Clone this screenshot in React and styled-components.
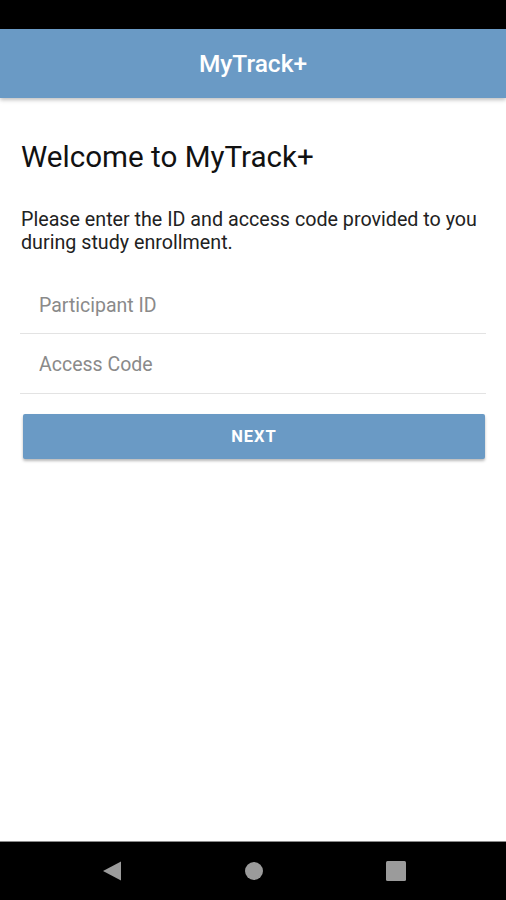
import styled, { createGlobalStyle } from "styled-components";

const GlobalStyle = createGlobalStyle`
  html, body {
    margin: 0;
    padding: 0;
    background: #fff;
  }
  body {
    font-family: Roboto, "Noto Sans", sans-serif;
  }
`;

const Screen = styled.div`
  width: 506px;
  height: 900px;
  display: flex;
  flex-direction: column;
  background: #fff;
  overflow: hidden;
`;

const StatusBar = styled.div`
  height: 29px;
  background: #000;
  flex-shrink: 0;
`;

const AppBar = styled.header`
  height: 69px;
  background: #6a9ac5;
  color: #fff;
  display: flex;
  align-items: center;
  justify-content: center;
  font-size: 24.5px;
  font-weight: 500;
  box-shadow: 0 2px 4px rgba(0, 0, 0, 0.25);
  flex-shrink: 0;
  position: relative;
  z-index: 1;
`;

const Content = styled.main`
  flex: 1;
  padding: 42px 19px 0 21px;
  display: flex;
  flex-direction: column;
`;

const Heading = styled.h1`
  margin: 0;
  font-size: 29.6px;
  font-weight: 400;
  color: #111;
  line-height: 34px;
`;

const Intro = styled.p`
  margin: 34px 0 0;
  font-size: 19.7px;
  line-height: 23px;
  color: #222;
`;

const Field = styled.input`
  display: block;
  width: 100%;
  box-sizing: border-box;
  height: ${(p) => (p.$first ? "80px" : "60px")};
  padding: ${(p) => (p.$first ? "23px 0 0 19px" : "1px 0 0 19px")};
  border: none;
  border-bottom: 1.5px solid #e3e3e3;
  font-family: Roboto, "Noto Sans", sans-serif;
  font-size: 19.5px;
  color: #333;
  outline: none;
  background: transparent;
  margin-left: -1px;

  &::placeholder {
    color: #8a8a8a;
  }
`;

const Button = styled.button`
  margin: 20px 0 0 2px;
  width: 462px;
  height: 45px;
  border: none;
  border-radius: 2px;
  background: #6a9ac5;
  color: #fff;
  font-family: Roboto, "Noto Sans", sans-serif;
  font-size: 16.5px;
  font-weight: 700;
  letter-spacing: 1px;
  box-shadow: 0 2px 3px rgba(0, 0, 0, 0.28);
  cursor: pointer;
`;

const NavBar = styled.nav`
  height: 58px;
  background: #000;
  border-top: 1px solid #8a8a8a;
  display: flex;
  align-items: center;
  justify-content: center;
  gap: 120px;
  padding-left: 2px;
  flex-shrink: 0;
`;

const NavIcon = styled.svg`
  width: 22px;
  height: 22px;
  fill: #9b9b9b;
`;

const App = () => {
  return (
    <>
      <GlobalStyle />
      <Screen>
        <StatusBar />
        <AppBar>MyTrack+</AppBar>
        <Content>
          <Heading>Welcome to MyTrack+</Heading>
          <Intro>
            Please enter the ID and access code provided to you during study
            enrollment.
          </Intro>
          <Field $first placeholder="Participant ID" />
          <Field placeholder="Access Code" />
          <Button>NEXT</Button>
        </Content>
        <NavBar>
          <NavIcon viewBox="0 0 22 22">
            <path d="M2 11 L20 1.5 L20 20.5 Z" />
          </NavIcon>
          <NavIcon viewBox="0 0 22 22">
            <circle cx="11" cy="11" r="9" />
          </NavIcon>
          <NavIcon viewBox="0 0 22 22">
            <rect x="1" y="1" width="20" height="20" rx="1.5" />
          </NavIcon>
        </NavBar>
      </Screen>
    </>
  );
};

export default App;
